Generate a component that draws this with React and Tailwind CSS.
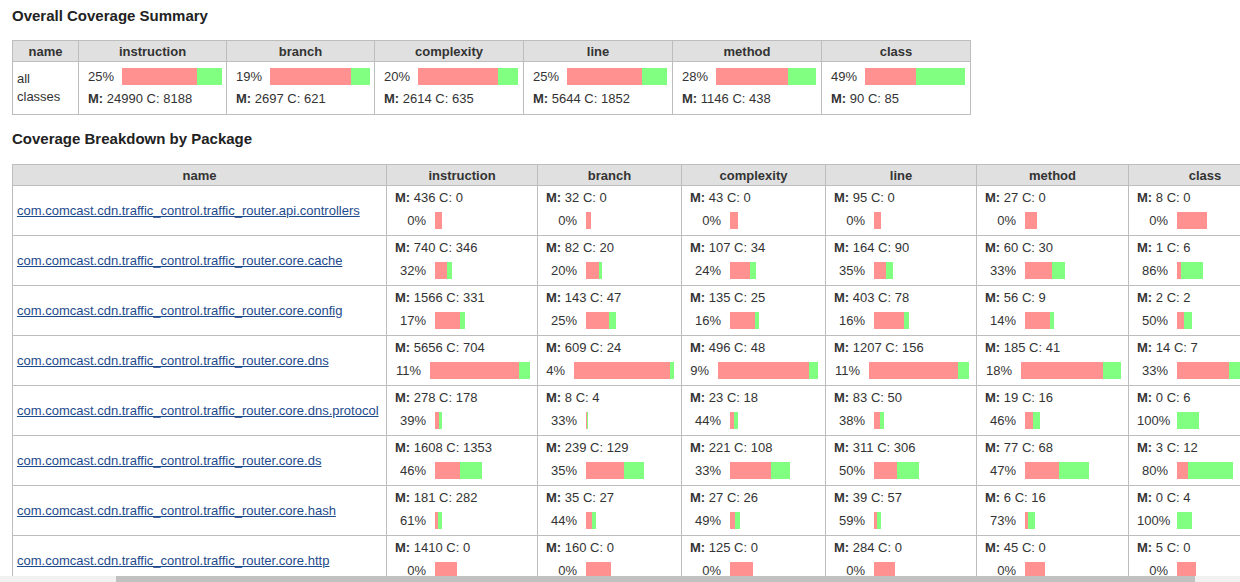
import React from "react";

const COLS = ["instruction", "branch", "complexity", "line", "method", "class"];
const MAX = { instruction: 6360, branch: 633, complexity: 544, line: 1363, method: 226, class: 27 };

const ROWS = [
  ["com.comcast.cdn.traffic_control.traffic_router.api.controllers", [[436, 0, "0%"], [32, 0, "0%"], [43, 0, "0%"], [95, 0, "0%"], [27, 0, "0%"], [8, 0, "0%"]]],
  ["com.comcast.cdn.traffic_control.traffic_router.core.cache", [[740, 346, "32%"], [82, 20, "20%"], [107, 34, "24%"], [164, 90, "35%"], [60, 30, "33%"], [1, 6, "86%"]]],
  ["com.comcast.cdn.traffic_control.traffic_router.core.config", [[1566, 331, "17%"], [143, 47, "25%"], [135, 25, "16%"], [403, 78, "16%"], [56, 9, "14%"], [2, 2, "50%"]]],
  ["com.comcast.cdn.traffic_control.traffic_router.core.dns", [[5656, 704, "11%"], [609, 24, "4%"], [496, 48, "9%"], [1207, 156, "11%"], [185, 41, "18%"], [14, 7, "33%"]]],
  ["com.comcast.cdn.traffic_control.traffic_router.core.dns.protocol", [[278, 178, "39%"], [8, 4, "33%"], [23, 18, "44%"], [83, 50, "38%"], [19, 16, "46%"], [0, 6, "100%"]]],
  ["com.comcast.cdn.traffic_control.traffic_router.core.ds", [[1608, 1353, "46%"], [239, 129, "35%"], [221, 108, "33%"], [311, 306, "50%"], [77, 68, "47%"], [3, 12, "80%"]]],
  ["com.comcast.cdn.traffic_control.traffic_router.core.hash", [[181, 282, "61%"], [35, 27, "44%"], [27, 26, "49%"], [39, 57, "59%"], [6, 16, "73%"], [0, 4, "100%"]]],
  ["com.comcast.cdn.traffic_control.traffic_router.core.http", [[1410, 0, "0%"], [160, 0, "0%"], [125, 0, "0%"], [284, 0, "0%"], [45, 0, "0%"], [5, 0, "0%"]]],
];

const SUMMARY = [
  [25, 24990, 8188],
  [19, 2697, 621],
  [20, 2614, 635],
  [25, 5644, 1852],
  [28, 1146, 438],
  [49, 90, 85],
];

function Bar({ red, green }) {
  return (
    <div className="flex h-[17px] shrink-0">
      {red > 0 && <div className="h-full bg-[#ff9191]" style={{ width: red }} />}
      {green > 0 && <div className="h-full bg-[#80ff80]" style={{ width: green }} />}
    </div>
  );
}

function MC({ m, c }) {
  return (
    <div className="leading-[16px] whitespace-nowrap">
      <span className="font-bold">M:</span> {m} C: {c}
    </div>
  );
}

const border = "border border-[#bdbdbd]";

export default function App() {
  return (
    <div className="h-[582px] w-[1240px] overflow-hidden flex flex-col bg-white font-['Liberation_Sans',Arial,sans-serif] text-[13px] text-[#333]">
      <div className="flex-1 overflow-hidden pl-[12px] pt-[7px]">
        <h2 className="text-[15px] leading-[18px] font-bold text-[#222]">Overall Coverage Summary</h2>
        <table className="mt-[15px] table-fixed border-collapse w-[958px]">
          <colgroup>
            <col className="w-[66px]" />
            <col className="w-[148px]" />
            <col className="w-[148px]" />
            <col className="w-[149px]" />
            <col className="w-[149px]" />
            <col className="w-[149px]" />
            <col className="w-[149px]" />
          </colgroup>
          <thead>
            <tr className="bg-[#e0e0e0]">
              {["name", ...COLS].map((h) => (
                <th key={h} className={`${border} h-[21px] p-0 leading-[15px] font-bold text-center`}>{h}</th>
              ))}
            </tr>
          </thead>
          <tbody>
            <tr>
              <td className={`${border} pl-[4px] align-middle leading-[18px]`}>
                all
                <br />
                classes
              </td>
              {SUMMARY.map(([p, m, c], i) => (
                <td key={i} className={`${border} pl-[9px] pr-[4px] pt-[6px] pb-[7px] align-top`}>
                  <div className="flex items-center h-[17px]">
                    <span className="w-[26px] shrink-0 whitespace-nowrap leading-[16px]">{p}%</span>
                    <div className="ml-[8px]">
                      <Bar red={100 - p} green={p} />
                    </div>
                  </div>
                  <div className="mt-[6px]">
                    <MC m={m} c={c} />
                  </div>
                </td>
              ))}
            </tr>
          </tbody>
        </table>

        <h2 className="mt-[15px] text-[15px] leading-[18px] font-bold text-[#222]">Coverage Breakdown by Package</h2>
        <table className="mt-[16px] table-fixed border-collapse w-[1269px]">
          <colgroup>
            <col className="w-[374px]" />
            <col className="w-[151px]" />
            <col className="w-[144px]" />
            <col className="w-[144px]" />
            <col className="w-[151px]" />
            <col className="w-[152px]" />
            <col className="w-[153px]" />
          </colgroup>
          <thead>
            <tr className="bg-[#e0e0e0]">
              {["name", ...COLS].map((h) => (
                <th key={h} className={`${border} h-[21px] p-0 leading-[15px] font-bold text-center`}>{h}</th>
              ))}
            </tr>
          </thead>
          <tbody>
            {ROWS.map(([name, cells]) => (
              <tr key={name}>
                <td className={`${border} pl-[4px] align-middle whitespace-nowrap`}>
                  <a href="#" className="text-[#1d4a8d] underline leading-[16px]">{name}</a>
                </td>
                {cells.map(([m, c, p], i) => {
                  const max = MAX[COLS[i]];
                  const red = Math.round((m * 100) / max);
                  const total = Math.round(((m + c) * 100) / max);
                  return (
                    <td key={i} className={`${border} h-[50px] pl-[8px] pr-[7px] pt-[4px] pb-[5px] align-top`}>
                      <MC m={m} c={c} />
                      <div className="mt-[6px] flex items-center h-[17px]">
                        <span className="w-[31px] shrink text-right whitespace-nowrap leading-[16px]">{p}</span>
                        <div className="ml-[9px] shrink-0">
                          <Bar red={red} green={total - red} />
                        </div>
                      </div>
                    </td>
                  );
                })}
              </tr>
            ))}
          </tbody>
        </table>
      </div>
      <div className="h-[6px] shrink-0 bg-[#f1f1f1] flex">
        <div className="ml-[116px] w-[1079px] h-full bg-[#c1c1c1]" />
      </div>
    </div>
  );
}
